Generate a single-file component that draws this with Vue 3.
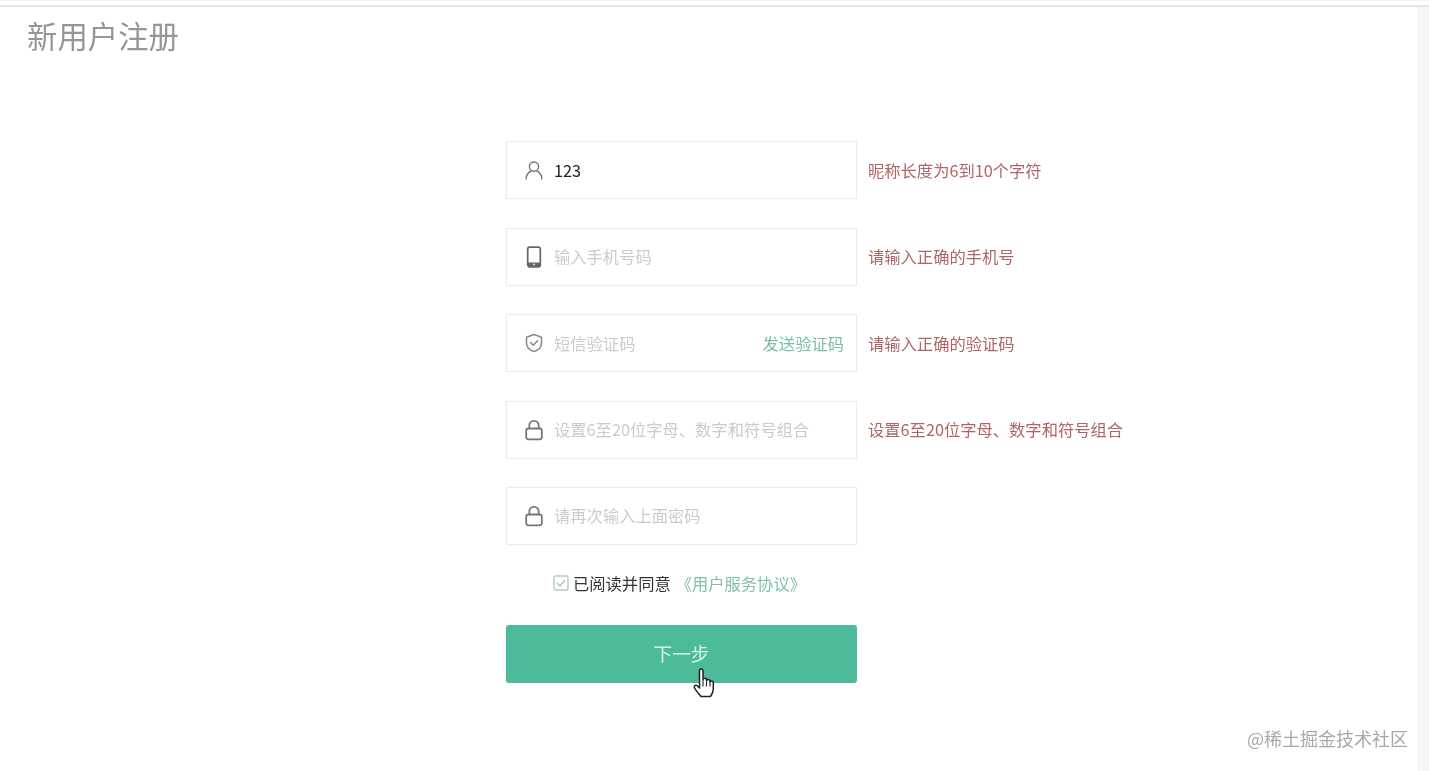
<script setup>
const rows = [
  { icon: 'user', value: '123', placeholder: '', error: '昵称长度为6到10个字符' },
  { icon: 'phone', value: '', placeholder: '输入手机号码', error: '请输入正确的手机号' },
  { icon: 'shield', value: '', placeholder: '短信验证码', error: '请输入正确的验证码', action: '发送验证码' },
  { icon: 'lock', value: '', placeholder: '设置6至20位字母、数字和符号组合', error: '设置6至20位字母、数字和符号组合' },
  { icon: 'lock', value: '', placeholder: '请再次输入上面密码', error: '' }
]
</script>

<template>
  <div class="page">
    <div class="topbar"></div>
    <div class="body">
      <main class="main">
        <h1 class="title">新用户注册</h1>
        <form class="form" @submit.prevent>
          <div v-for="(row, i) in rows" :key="i" class="row">
            <label class="field">
              <span class="icon">
                <svg v-if="row.icon === 'user'" width="20" height="20" viewBox="0 0 20 20" fill="none" stroke="#777" stroke-width="1.4" stroke-linecap="round">
                  <circle cx="10" cy="6.6" r="4.6" />
                  <path d="M2 19c.4-4.500 2.800-7 5.300-8M18 19c-.4-4.500-2.800-7-5.300-8" />
                </svg>
                <svg v-else-if="row.icon === 'phone'" width="20" height="22" viewBox="0 0 20 22" fill="none">
                  <rect x="3.700" y="1.200" width="12.600" height="19.600" rx="2" stroke="#666" stroke-width="1.700" />
                  <path d="M3.700 16.500h12.600v2.300a2 2 0 0 1-2 2H5.700a2 2 0 0 1-2-2z" fill="#666" />
                  <circle cx="10" cy="18.600" r="1" fill="#ddd" />
                </svg>
                <svg v-else-if="row.icon === 'shield'" width="20" height="20" viewBox="0 0 20 20" fill="none" stroke="#888" stroke-width="1.500" stroke-linejoin="round" stroke-linecap="round">
                  <path d="M10 1.500l7.500 2.700v6c0 4-3.300 6.800-7.500 8.300-4.200-1.500-7.500-4.300-7.500-8.300v-6z" />
                  <path d="M6.500 9.500l2.700 2.700 4.500-4.500" />
                </svg>
                <svg v-else width="20" height="22" viewBox="0 0 20 22" fill="none" stroke="#777" stroke-width="1.800">
                  <rect x="2.200" y="9.500" width="15.600" height="10.800" rx="2.200" />
                  <path d="M5.300 9.500V6.500a4.700 4.700 0 0 1 9.400 0v3" />
                </svg>
              </span>
              <input class="input" :value="row.value" :placeholder="row.placeholder" />
              <a v-if="row.action" class="action">{{ row.action }}</a>
            </label>
            <span class="error">{{ row.error }}</span>
          </div>
          <div class="agree">
            <span class="check">
              <svg width="16" height="16" viewBox="0 0 16 16" fill="none">
                <rect x="1" y="1" width="14" height="14" rx="1.500" stroke="#b5c9c2" stroke-width="1.400" />
                <path d="M4 8l3 3 5-6" stroke="#a9bdb6" stroke-width="1.300" />
              </svg>
            </span>
            <span class="agree-text">已阅读并同意</span>
            <a class="agree-link">《用户服务协议》</a>
          </div>
          <div class="submit-wrap">
            <button class="submit" type="button">下一步</button>
            <svg class="cursor" width="23" height="30" viewBox="0 0 23 30">
              <path d="M6.500 2.500c0-2 3.500-2 3.500 0v9c.3-1.700 3.200-1.700 3.500 0v1c.4-1.500 3.200-1.400 3.500.3v1c.5-1.300 3.200-1.100 3.300.7v6.500c0 3-1.600 5.800-2.800 7.500H8c-1.500-1.800-5.500-6.500-6.500-8.800-.8-1.900 1.200-3.200 2.700-2l2.300 2.300z" fill="#fff" stroke="#222" stroke-width="1.500" stroke-linejoin="round" />
              <path d="M10 12v6.500M13.500 12.500v6M17 13.500v5" stroke="#222" stroke-width="1.100" fill="none" />
            </svg>
          </div>
        </form>
      </main>
      <div class="scrollbar"></div>
    </div>
    <div class="watermark">@稀土掘金技术社区</div>
  </div>
</template>

<style scoped>
.page {
  position: relative;
  height: 771px;
  overflow: hidden;
  display: flex;
  flex-direction: column;
  background: #fff;
  font-family: "Noto Sans CJK SC", "Liberation Sans", sans-serif;
  filter: blur(0.5px);
}
.topbar {
  height: 7px;
  flex: none;
  box-sizing: border-box;
  border-top: 1px solid #f4f4f4;
  border-bottom: 2px solid #e6e6e6;
}
.body {
  flex: 1;
  display: flex;
  min-height: 0;
}
.main {
  flex: 1;
  min-width: 0;
}
.scrollbar {
  width: 12px;
  flex: none;
  background: #f6f6f6;
}
.title {
  margin: 6px 0 0 27px;
  font-size: 30.400px;
  line-height: 44px;
  font-weight: 400;
  color: #969696;
}
.form {
  margin: 84.400px 0 0 506px;
  display: flex;
  flex-direction: column;
}
.row {
  display: flex;
  align-items: center;
  height: 58px;
  margin-bottom: 28.400px;
}
.field {
  width: 351px;
  height: 58px;
  box-sizing: border-box;
  flex: none;
  display: flex;
  align-items: center;
  padding: 0 12px 0 17px;
  border: 1px solid #ececec;
  box-shadow: 0 0 1px #eee;
}
.icon {
  width: 20px;
  flex: none;
  display: flex;
  justify-content: center;
  margin-right: 10px;
}
.input {
  flex: 1;
  min-width: 0;
  border: 0;
  outline: 0;
  padding: 0 0 1px;
  font: inherit;
  font-size: 16.300px;
  color: #222;
  background: transparent;
}
.input::placeholder {
  color: #cbcbcb;
  opacity: 1;
}
.action {
  flex: none;
  font-size: 16.300px;
  color: #7cbda6;
  margin-bottom: 1px;
}
.error {
  margin-left: 11px;
  margin-bottom: 1px;
  font-size: 16.300px;
  color: #ad6666;
  white-space: nowrap;
}
.agree {
  display: flex;
  align-items: center;
  height: 24px;
  margin-top: -2px;
  padding-left: 47px;
  font-size: 16.300px;
}
.check {
  display: flex;
  margin-right: 4px;
}
.agree-text {
  color: #333;
}
.agree-link {
  margin-left: 5px;
  color: #82bfaa;
}
.submit-wrap {
  position: relative;
  width: 351px;
  margin-top: 29.600px;
}
.submit {
  display: block;
  width: 351px;
  height: 58px;
  padding: 0 0 2px;
  border: 0;
  border-radius: 3px;
  background: #4cba9b;
  color: #d5f2e8;
  font: inherit;
  font-size: 18.700px;
}
.cursor {
  position: absolute;
  left: 187px;
  top: 43px;
}
.watermark {
  position: absolute;
  right: 21px;
  top: 726px;
  font-size: 18px;
  line-height: 24px;
  color: #a8a8a8;
}
</style>
